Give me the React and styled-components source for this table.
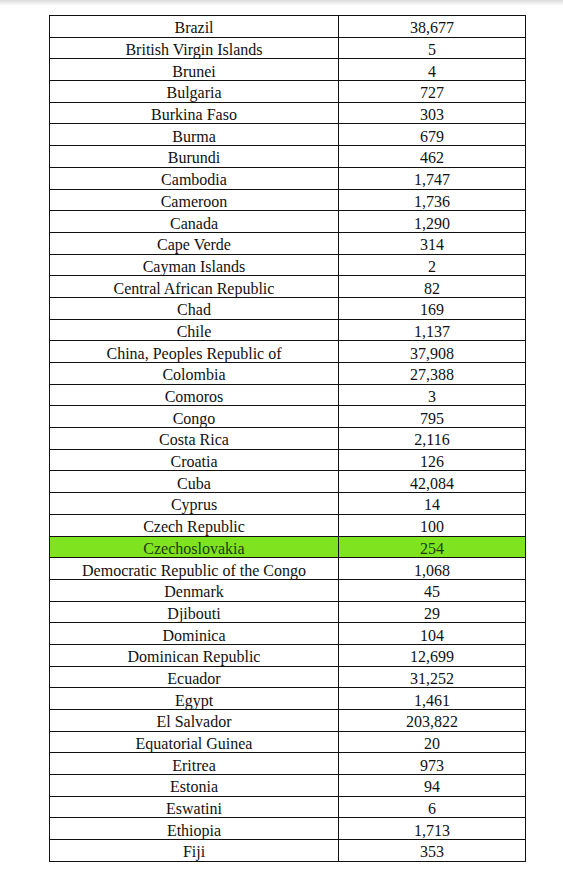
import React from "react";
import styled, { createGlobalStyle } from "styled-components";

const Global = createGlobalStyle`
  body {
    margin: 0;
    background: #ffffff;
    font-family: "Liberation Serif", "Times New Roman", serif;
  }
`;

const Page = styled.div`
  width: 563px;
  height: 874px;
  background: #ffffff;
`;

const Shade = styled.div`
  height: 6px;
  background: linear-gradient(#dcdcdc, #ffffff);
`;

const Table = styled.table`
  margin: 9px 0 0 49px;
  width: 476px;
  border-collapse: collapse;
  table-layout: fixed;
`;

const Row = styled.tr`
  height: 21.69px;
  background: ${(p) => (p.$hl ? "#7fe31f" : "transparent")};
`;

const Cell = styled.td`
  border: 1px solid #111;
  padding: 4px 0 0;
  text-align: center;
  line-height: 16px;
  white-space: nowrap;
  font-family: "Liberation Serif", "Times New Roman", serif;
  font-size: 16px;
  color: ${(p) => (p.$hl ? "#1d3a10" : "#111")};
`;

const rows = [
  ["Brazil", "38,677"],
  ["British Virgin Islands", "5"],
  ["Brunei", "4"],
  ["Bulgaria", "727"],
  ["Burkina Faso", "303"],
  ["Burma", "679"],
  ["Burundi", "462"],
  ["Cambodia", "1,747"],
  ["Cameroon", "1,736"],
  ["Canada", "1,290"],
  ["Cape Verde", "314"],
  ["Cayman Islands", "2"],
  ["Central African Republic", "82"],
  ["Chad", "169"],
  ["Chile", "1,137"],
  ["China, Peoples Republic of", "37,908"],
  ["Colombia", "27,388"],
  ["Comoros", "3"],
  ["Congo", "795"],
  ["Costa Rica", "2,116"],
  ["Croatia", "126"],
  ["Cuba", "42,084"],
  ["Cyprus", "14"],
  ["Czech Republic", "100"],
  ["Czechoslovakia", "254"],
  ["Democratic Republic of the Congo", "1,068"],
  ["Denmark", "45"],
  ["Djibouti", "29"],
  ["Dominica", "104"],
  ["Dominican Republic", "12,699"],
  ["Ecuador", "31,252"],
  ["Egypt", "1,461"],
  ["El Salvador", "203,822"],
  ["Equatorial Guinea", "20"],
  ["Eritrea", "973"],
  ["Estonia", "94"],
  ["Eswatini", "6"],
  ["Ethiopia", "1,713"],
  ["Fiji", "353"],
];

export default function App() {
  return (
    <Page>
      <Global />
      <Shade />
      <Table>
        <colgroup>
          <col style={{ width: "289px" }} />
          <col style={{ width: "187px" }} />
        </colgroup>
        <tbody>
          {rows.map(([country, count]) => {
            const hl = country === "Czechoslovakia";
            return (
              <Row key={country} $hl={hl}>
                <Cell $hl={hl}>{country}</Cell>
                <Cell $hl={hl}>{count}</Cell>
              </Row>
            );
          })}
        </tbody>
      </Table>
    </Page>
  );
}
